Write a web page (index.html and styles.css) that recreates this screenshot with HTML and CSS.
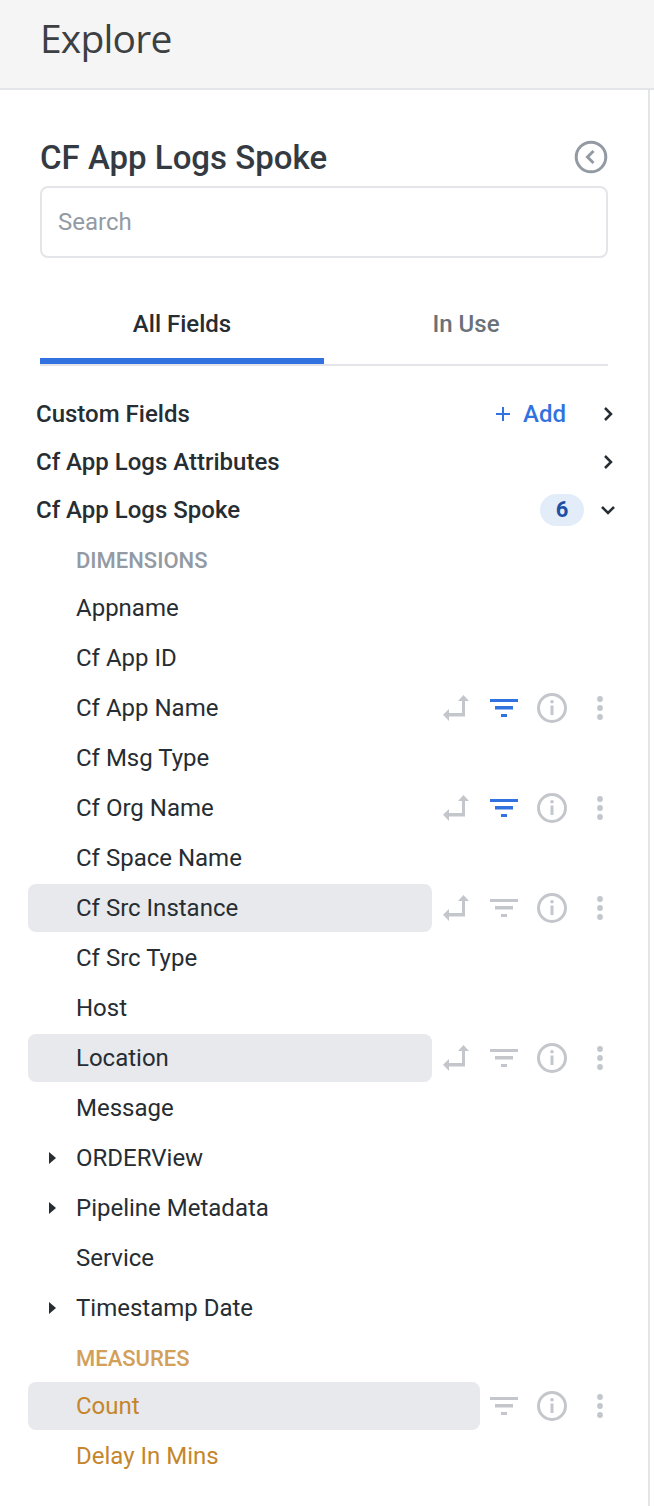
FILE: index.html
```html
<!DOCTYPE html>
<html lang="en">
<head>
    <meta charset="UTF-8">
    <meta name="viewport" content="width=device-width, initial-scale=1.0">
    <title>Explore</title>
    <link rel="stylesheet" href="styles.css">
</head>
<body>
    <svg class="sprite" width="0" height="0">
        <symbol id="i-pivot" viewBox="0 0 28 28">
            <path d="M21.5 1 L27 7 H23 V22.5 H7 V27 L1 20.8 L7 15 V19 H20 V7 H16 Z" />
        </symbol>
        <symbol id="i-filter" viewBox="0 0 28 20">
            <path d="M0 1 H28 V4 H0 Z M5 8 H23 V11.5 H5 Z M11 16 H17 V19 H11 Z" />
        </symbol>
        <symbol id="i-info" viewBox="0 0 30 30">
            <path d="M15 0 A15 15 0 1 0 15 30 A15 15 0 1 0 15 0 Z M15 3 A12 12 0 1 1 15 27 A12 12 0 1 1 15 3 Z" fill-rule="evenodd" />
            <path d="M13.5 12.5 H16.5 V22 H13.5 Z" />
            <circle cx="15" cy="8.8" r="1.8" />
        </symbol>
        <symbol id="i-dots" viewBox="0 0 6 24">
            <circle cx="3" cy="3" r="2.9" />
            <circle cx="3" cy="12" r="2.9" />
            <circle cx="3" cy="21" r="2.9" />
        </symbol>
    </svg>

    <header class="topbar">
        <h1>Explore</h1>
    </header>

    <main class="panel">
        <div class="title-row">
            <h2>CF App Logs Spoke</h2>
            <svg class="collapse" width="34" height="34" viewBox="0 0 34 34">
                <circle cx="17" cy="17" r="14.8" />
                <path d="M19.5 11 L13.5 17 L19.5 23" />
            </svg>
        </div>

        <input class="search" type="text" placeholder="Search">

        <div class="tabs">
            <div class="tab active">All Fields</div>
            <div class="tab">In Use</div>
        </div>

        <div class="groups">
            <div class="group">
                <span class="group-name">Custom Fields</span>
                <span class="add">
                    <svg width="16" height="16" viewBox="0 0 16 16"><path d="M8 1 V15 M1 8 H15" /></svg>
                    Add
                </span>
                <svg class="chev" width="24" height="24" viewBox="0 0 24 24"><path d="M9 6 L15 12 L9 18" /></svg>
            </div>
            <div class="group">
                <span class="group-name">Cf App Logs Attributes</span>
                <svg class="chev" width="24" height="24" viewBox="0 0 24 24"><path d="M9 6 L15 12 L9 18" /></svg>
            </div>
            <div class="group">
                <span class="group-name">Cf App Logs Spoke</span>
                <span class="badge">6</span>
                <svg class="chev" width="24" height="24" viewBox="0 0 24 24"><path d="M6 9 L12 15 L18 9" /></svg>
            </div>
        </div>

        <div class="label">DIMENSIONS</div>
        <div class="field first"><span class="field-name">Appname</span></div>
        <div class="field"><span class="field-name">Cf App ID</span></div>
        <div class="field">
            <span class="field-name">Cf App Name</span>
            <div class="actions">
                <svg class="act pivot"><use href="#i-pivot" /></svg>
                <svg class="act filter on"><use href="#i-filter" /></svg>
                <svg class="act info"><use href="#i-info" /></svg>
                <svg class="act dots"><use href="#i-dots" /></svg>
            </div>
        </div>
        <div class="field"><span class="field-name">Cf Msg Type</span></div>
        <div class="field">
            <span class="field-name">Cf Org Name</span>
            <div class="actions">
                <svg class="act pivot"><use href="#i-pivot" /></svg>
                <svg class="act filter on"><use href="#i-filter" /></svg>
                <svg class="act info"><use href="#i-info" /></svg>
                <svg class="act dots"><use href="#i-dots" /></svg>
            </div>
        </div>
        <div class="field"><span class="field-name">Cf Space Name</span></div>
        <div class="field hover">
            <span class="field-name">Cf Src Instance</span>
            <div class="actions">
                <svg class="act pivot"><use href="#i-pivot" /></svg>
                <svg class="act filter"><use href="#i-filter" /></svg>
                <svg class="act info"><use href="#i-info" /></svg>
                <svg class="act dots"><use href="#i-dots" /></svg>
            </div>
        </div>
        <div class="field"><span class="field-name">Cf Src Type</span></div>
        <div class="field"><span class="field-name">Host</span></div>
        <div class="field hover">
            <span class="field-name">Location</span>
            <div class="actions">
                <svg class="act pivot"><use href="#i-pivot" /></svg>
                <svg class="act filter"><use href="#i-filter" /></svg>
                <svg class="act info"><use href="#i-info" /></svg>
                <svg class="act dots"><use href="#i-dots" /></svg>
            </div>
        </div>
        <div class="field"><span class="field-name">Message</span></div>
        <div class="field"><span class="field-name"><i class="caret"></i>ORDERView</span></div>
        <div class="field"><span class="field-name"><i class="caret"></i>Pipeline Metadata</span></div>
        <div class="field"><span class="field-name">Service</span></div>
        <div class="field"><span class="field-name"><i class="caret"></i>Timestamp Date</span></div>

        <div class="label measures">MEASURES</div>
        <div class="field first measure hover">
            <span class="field-name">Count</span>
            <div class="actions">
                <svg class="act filter"><use href="#i-filter" /></svg>
                <svg class="act info"><use href="#i-info" /></svg>
                <svg class="act dots"><use href="#i-dots" /></svg>
            </div>
        </div>
        <div class="field measure"><span class="field-name">Delay In Mins</span></div>
    </main>
</body>
</html>
```

FILE: styles.css
```css
* {
    box-sizing: border-box;
}

body {
    margin: 0;
    height: 1506px;
    overflow: hidden;
    background-color: white;
    font-family: Roboto, Arial, sans-serif;
    color: #262d33;
}

.sprite {
    position: absolute;
}

.topbar {
    height: 90px;
    padding-left: 40px;
    background-color: #f5f5f5;
    border-bottom: 2px solid #e4e5e8;
}

.topbar h1 {
    margin: 0;
    font-family: "Open Sans", Arial, sans-serif;
    font-size: 39px;
    font-weight: 400;
    line-height: 76px;
    letter-spacing: -0.8px;
    color: #3c4043;
}

.panel {
    width: 650px;
    height: 1416px;
    padding: 48px 26px 0 28px;
    border-right: 2px solid #e4e5e8;
}

.title-row {
    display: flex;
    align-items: center;
    justify-content: space-between;
    height: 38px;
    padding-left: 12px;
    margin-right: 14px;
}

.title-row h2 {
    margin: 0;
    font-size: 33px;
    font-weight: 500;
    color: #343a41;
}

.collapse {
    fill: none;
    stroke: #939aa3;
    stroke-width: 3;
}

.search {
    display: block;
    width: 568px;
    height: 72px;
    margin: 10px 0 0 12px;
    padding: 0 16px;
    border: 2px solid #e4e5e8;
    border-radius: 8px;
    font-family: Roboto, Arial, sans-serif;
    font-size: 24px;
}

.search::placeholder {
    color: #939aa3;
}

.tabs {
    display: flex;
    width: 568px;
    height: 108px;
    margin-left: 12px;
    border-bottom: 2px solid #e4e5e8;
}

.tab {
    flex: 1;
    padding-top: 50px;
    text-align: center;
    font-size: 24px;
    font-weight: 500;
    line-height: 32px;
    color: #6a717a;
}

.tab.active {
    color: #262d33;
    border-bottom: 6px solid #3272e0;
}

.groups {
    margin-top: 24px;
}

.group {
    display: flex;
    align-items: center;
    height: 48px;
    padding-left: 8px;
}

.group-name {
    flex: 1;
    font-size: 24px;
    font-weight: 500;
}

.chev {
    margin: 0 2px 0 12px;
    fill: none;
    stroke: #262d33;
    stroke-width: 2.5;
}

.add {
    display: flex;
    align-items: center;
    gap: 12px;
    margin-right: 18px;
    font-size: 24px;
    font-weight: 500;
    color: #3272e0;
}

.add svg {
    fill: none;
    stroke: #3272e0;
    stroke-width: 2;
}

.badge {
    width: 44px;
    height: 32px;
    border-radius: 16px;
    background-color: #e3edfa;
    text-align: center;
    font-size: 22px;
    font-weight: 700;
    line-height: 32px;
    color: #1f4fa3;
}

.label {
    height: 26px;
    margin-top: 14px;
    padding-left: 48px;
    font-size: 22px;
    font-weight: 500;
    line-height: 26px;
    color: #939aa3;
}

.label.measures {
    color: #d3a05a;
}

.field {
    display: flex;
    height: 48px;
    margin-top: 2px;
}

.field.first {
    margin-top: 10px;
}

.field-name {
    position: relative;
    flex: 1;
    padding-left: 48px;
    border-radius: 8px;
    font-size: 24px;
    line-height: 48px;
}

.field.hover .field-name {
    background-color: #e8e9ed;
}

.measure .field-name {
    color: #c5862b;
}

.caret {
    position: absolute;
    left: 21px;
    top: 18px;
    border-left: 7px solid #262d33;
    border-top: 6px solid transparent;
    border-bottom: 6px solid transparent;
}

.actions {
    display: flex;
    align-items: center;
    margin-right: -2px;
}

.act {
    fill: #c3c7cc;
    margin: 0 10px;
    width: 28px;
    height: 28px;
}

.act.filter {
    height: 20px;
}

.act.filter.on {
    fill: #3272e0;
}

.act.info {
    width: 30px;
    height: 30px;
    margin: 0 9px;
}

.act.dots {
    width: 6px;
    height: 24px;
    margin: 0 21px;
}
```
